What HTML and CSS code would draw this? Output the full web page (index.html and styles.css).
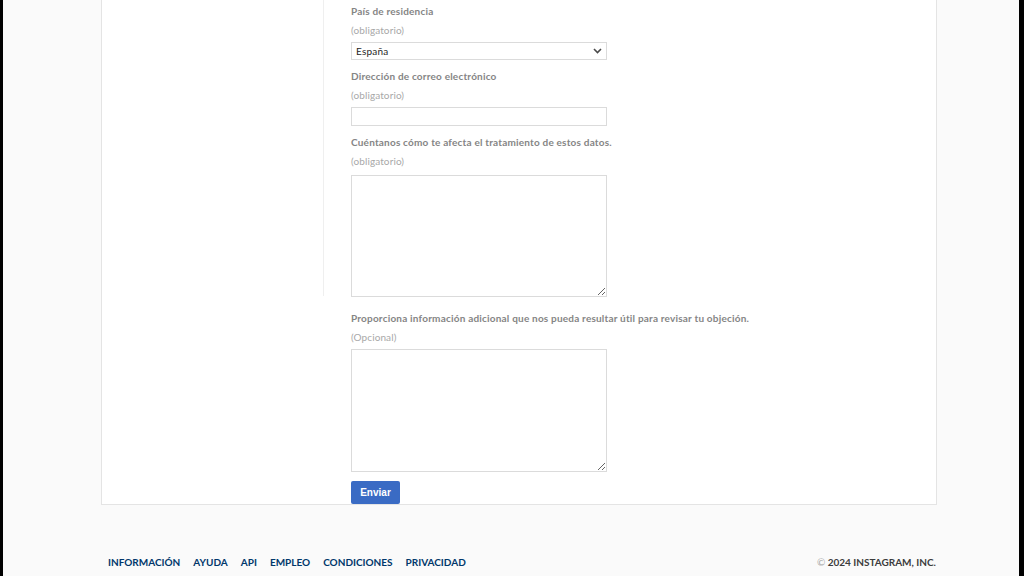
FILE: index.html
```html
<!DOCTYPE html>
<html lang="es">
<head>
<meta charset="utf-8">
<title>Objeción</title>
<link rel="stylesheet" href="styles.css">
</head>
<body>
<div class="frame">
  <div class="page">
    <div class="card">
      <aside class="side"></aside>
      <form class="form">
        <div class="field">
          <label class="label">País de residencia</label>
          <div class="hint">(obligatorio)</div>
          <div class="select-wrap">
            <select class="select"><option>España</option></select>
            <svg class="chev" width="9" height="6" viewBox="0 0 9 6"><path d="M1 1 L4.5 4.5 L8 1" fill="none" stroke="#4a4a4a" stroke-width="1.6"/></svg>
          </div>
        </div>
        <div class="field">
          <label class="label">Dirección de correo electrónico</label>
          <div class="hint">(obligatorio)</div>
          <input class="input" type="text">
        </div>
        <div class="field">
          <label class="label">Cuéntanos cómo te afecta el tratamiento de estos datos.</label>
          <div class="hint">(obligatorio)</div>
          <textarea class="area"></textarea>
        </div>
        <div class="field field-extra">
          <label class="label">Proporciona información adicional que nos pueda resultar útil para revisar tu objeción.</label>
          <div class="hint">(Opcional)</div>
          <textarea class="area area-extra"></textarea>
        </div>
        <button class="submit" type="button">Enviar</button>
      </form>
    </div>
    <footer class="footer">
      <nav class="links">
        <a href="#">INFORMACIÓN</a>
        <a href="#">AYUDA</a>
        <a href="#">API</a>
        <a href="#">EMPLEO</a>
        <a href="#">CONDICIONES</a>
        <a href="#">PRIVACIDAD</a>
      </nav>
      <div class="copy"><span class="c">©</span> 2024 INSTAGRAM, INC.</div>
    </footer>
  </div>
</div>
</body>
</html>
```
FILE: styles.css
```css
* { box-sizing: border-box; }
html, body { margin: 0; padding: 0; height: 100%; }
body {
  background: #000;
  font-family: Lato, "Open Sans", sans-serif;
}
.frame {
  height: 576px;
  margin: 0 5px 0 3px;
  background: #fafafa;
  overflow: hidden;
}
.page {
  width: 836px;
  margin-left: 98px;
}
.card {
  display: flex;
  align-items: flex-start;
  background: #fff;
  border: 1px solid #e4e4e4;
  border-top: none;
  height: 505px;
}
.side {
  width: 222px;
  height: 296px;
  border-right: 1px solid #efefef;
  flex: none;
}
.form {
  padding-left: 27px;
  padding-top: 4px;
  display: flex;
  flex-direction: column;
  align-items: flex-start;
}
.field { display: flex; flex-direction: column; }
.label {
  font-size: 10px;
  font-weight: 700;
  color: #858585;
  line-height: 14px;
  letter-spacing: 0.2px;
}
.hint {
  font-size: 10px;
  color: #a8a8a8;
  line-height: 14px;
  margin-top: 5px;
  letter-spacing: 0.1px;
}
.select-wrap {
  position: relative;
  margin-top: 5px;
  width: 256px;
  height: 18px;
}
.select {
  appearance: none;
  -webkit-appearance: none;
  display: block;
  width: 256px;
  height: 18px;
  font-family: Lato, "Open Sans", sans-serif;
  font-size: 10px;
  color: #262626;
  border: 1px solid #dbdbdb;
  border-radius: 0;
  background: #fff;
  padding: 0 4px;
  letter-spacing: 0.2px;
}
.chev {
  position: absolute;
  right: 5px;
  top: 6px;
  pointer-events: none;
}
.input {
  margin-top: 5px;
  width: 256px;
  height: 19px;
  border: 1px solid #dbdbdb;
  border-radius: 0;
  background: #fff;
}
.area {
  margin-top: 7px;
  width: 256px;
  height: 122px;
  border: 1px solid #dbdbdb;
  border-radius: 0;
  background: #fff;
  resize: vertical;
}
.area-extra { margin-top: 5px; height: 123px; }
.field + .field { margin-top: 9px; }
.field-extra { margin-top: 14px !important; }
.submit {
  margin-top: 9px;
  width: 49px;
  height: 23px;
  background: #3a6bc4;
  border: none;
  border-radius: 2px;
  color: #fff;
  font-family: "Liberation Sans", sans-serif;
  font-weight: 700;
  font-size: 10px;
  padding: 0;
}
.footer {
  display: flex;
  justify-content: space-between;
  align-items: center;
  margin-top: 51px;
  padding-left: 7px;
  padding-right: 1px;
}
.links { display: flex; gap: 13px; }
.links a {
  color: #00376b;
  text-decoration: none;
  font-size: 10px;
  font-weight: 700;
}
.copy {
  font-size: 10px;
  font-weight: 700;
  color: #3c3c3c;
}
.copy .c { color: #a8a8a8; font-weight: 400; }
```
